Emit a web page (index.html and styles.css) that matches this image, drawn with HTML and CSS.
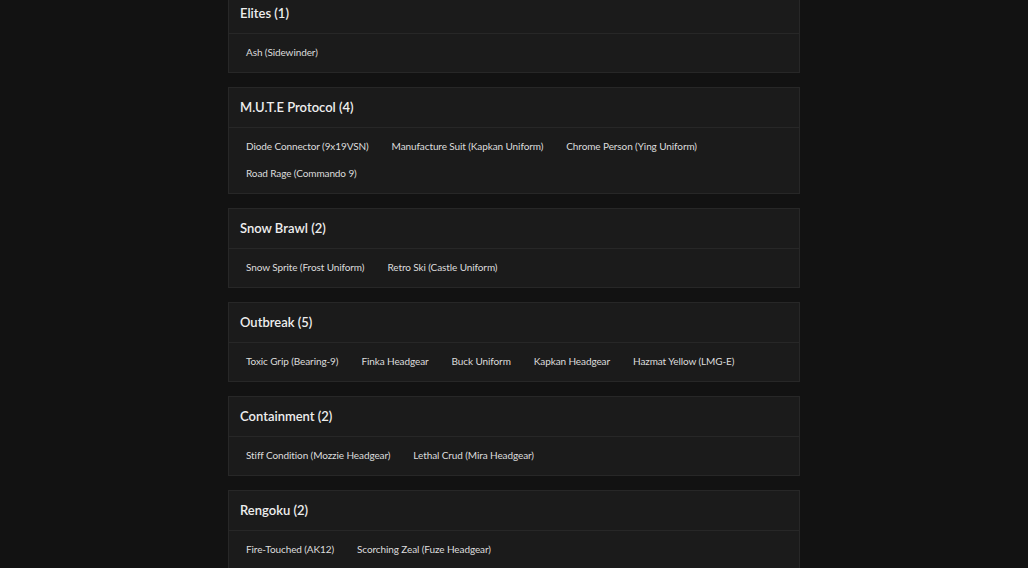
FILE: index.html
```html
<!DOCTYPE html>
<html lang="en">
<head>
    <meta charset="UTF-8">
    <meta name="viewport" content="width=device-width, initial-scale=1.0">
    <title>Event Collections</title>
    <link rel="stylesheet" href="styles.css">
</head>
<body>
    <div class="collections">
        <div class="event">
            <div class="event-head">Elites (1)</div>
            <div class="event-items">
                <span class="item">Ash (Sidewinder)</span>
            </div>
        </div>

        <div class="event">
            <div class="event-head">M.U.T.E Protocol (4)</div>
            <div class="event-items">
                <span class="item">Diode Connector (9x19VSN)</span>
                <span class="item">Manufacture Suit (Kapkan Uniform)</span>
                <span class="item">Chrome Person (Ying Uniform)</span>
                <span class="item">Road Rage (Commando 9)</span>
            </div>
        </div>

        <div class="event">
            <div class="event-head">Snow Brawl (2)</div>
            <div class="event-items">
                <span class="item">Snow Sprite (Frost Uniform)</span>
                <span class="item">Retro Ski (Castle Uniform)</span>
            </div>
        </div>

        <div class="event">
            <div class="event-head">Outbreak (5)</div>
            <div class="event-items">
                <span class="item">Toxic Grip (Bearing-9)</span>
                <span class="item">Finka Headgear</span>
                <span class="item">Buck Uniform</span>
                <span class="item">Kapkan Headgear</span>
                <span class="item">Hazmat Yellow (LMG-E)</span>
            </div>
        </div>

        <div class="event">
            <div class="event-head">Containment (2)</div>
            <div class="event-items">
                <span class="item">Stiff Condition (Mozzie Headgear)</span>
                <span class="item">Lethal Crud (Mira Headgear)</span>
            </div>
        </div>

        <div class="event">
            <div class="event-head">Rengoku (2)</div>
            <div class="event-items">
                <span class="item">Fire-Touched (AK12)</span>
                <span class="item">Scorching Zeal (Fuze Headgear)</span>
            </div>
        </div>
    </div>
</body>
</html>
```

FILE: styles.css
```css
body {
    background-color: #121212;
    color: #e6e6e6;
    font-family: Lato, "Noto Sans", sans-serif;
    margin: 0;
}

.collections {
    width: 572px;
    margin: -7px auto 0 auto;
}

.event {
    background-color: #1b1b1b;
    border: 1px solid #272727;
    margin-bottom: 14px;
}

.event-head {
    height: 39px;
    line-height: 38px;
    padding: 0 11px;
    font-size: 13px;
    font-weight: 600;
    color: #eeeeee;
    border-bottom: 1px solid #272727;
}

.event-items {
    display: flex;
    flex-wrap: wrap;
    column-gap: 11px;
    padding: 5px 11px 6px 11px;
}

.item {
    padding: 0 6px;
    height: 27px;
    line-height: 26px;
    font-size: 10px;
    letter-spacing: -0.1px;
    color: #dddddd;
}
```
